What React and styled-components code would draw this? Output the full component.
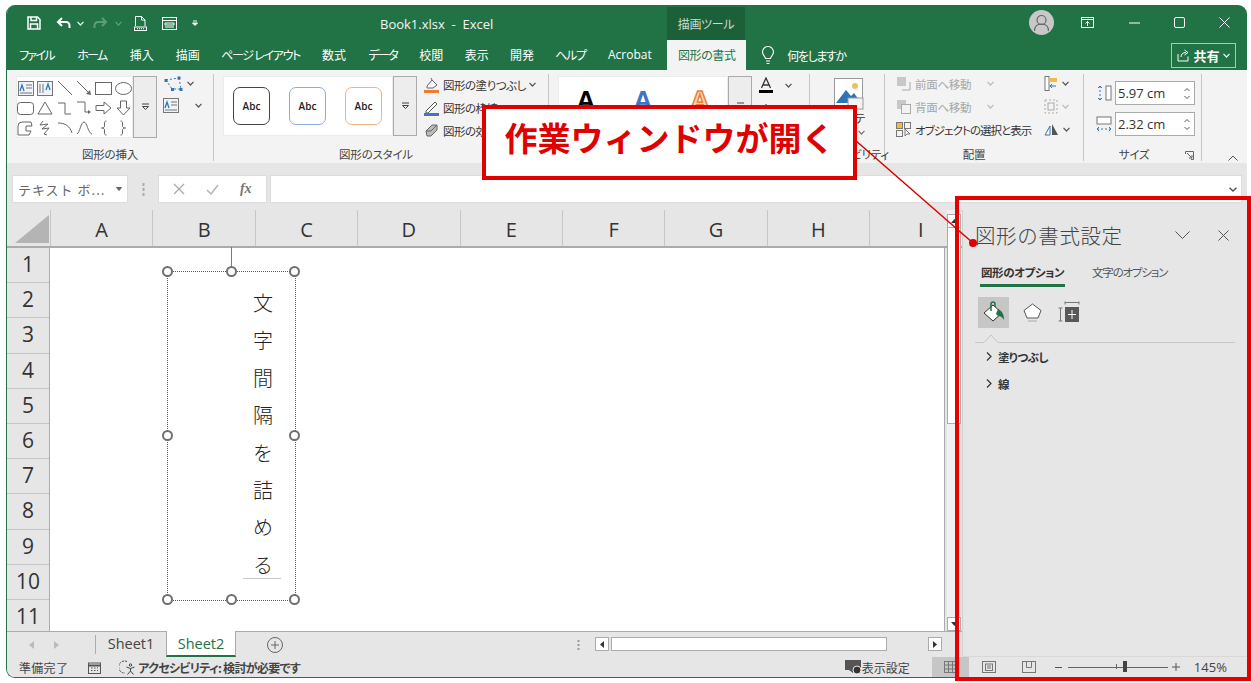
import React from "react";
import styled, { createGlobalStyle } from "styled-components";

const Global = createGlobalStyle`
  html, body { margin: 0; padding: 0; background: #fff; overflow: hidden; }
  * { box-sizing: border-box; }
`;
const UI = `"Noto Sans CJK JP", "Noto Sans", sans-serif`;
const LATIN = `"Open Sans", "Noto Sans CJK JP", sans-serif`;

const Page = styled.div`
  position: relative; width: 1251px; height: 683px; padding: 5px 4px 5px 6px; overflow: hidden;
  font-family: ${UI}; font-feature-settings: "palt"; color: #333;
`;
const Win = styled.div`
  width: 1241px; height: 673px; display: flex; flex-direction: column; overflow: hidden;
  border-radius: 9px 9px 0 9px; border-left: 1px solid #217346; border-bottom: 1px solid #217346; background: #e6e6e6;
`;
const TitleBar = styled.div`
  height: 35px; flex: none; display: flex; background: #217346; color: #fff;
`;
const Qat = styled.div`
  width: 373px; flex: none; display: flex; align-items: center; padding-left: 19px;
`;
const QatBtn = styled.div`
  width: ${p => p.$w}px; margin-left: ${p => p.$ml || 0}px; display: flex; justify-content: center; align-items: center; padding-top: 1px;
`;
const Title = styled.div`
  width: 287px; flex: none; font: 13px/35px ${LATIN}; color: #f2f7f4; padding-top: 2px;
`;
const ContextTab = styled.div`
  width: 78px; flex: none; margin-top: 2px; background: #1c6039; color: #c9dcd1; font-size: 12px; line-height: 33px; text-align: center; letter-spacing: -.3px;
`;
const TitleRight = styled.div`
  flex: 1; display: flex; align-items: center; padding-left: 284px;
`;
const Avatar = styled.div`
  width: 25px; height: 25px; flex: none; border-radius: 50%; background: #c8c8c8; display: flex; align-items: center; justify-content: center; margin-right: 27px;
`;
const WinBtn = styled.div`
  width: ${p => p.$w}px; flex: none; display: flex; justify-content: ${p => p.$start ? "flex-start" : "center"};
`;
const TabBar = styled.div`
  height: 30px; flex: none; display: flex; align-items: stretch; background: #217346; color: #fff; padding-left: 12px; font-size: 12px; position: relative;
`;
const Tab = styled.div`
  width: ${p => p.$w}px; flex: none; margin-right: ${p => p.$mr ?? 22.4}px; display: flex; justify-content: center; line-height: 30px; white-space: nowrap; letter-spacing: ${p => p.$ls ?? 0}px;
  ${p => p.$active && `background:#f3f3f3;color:#217346;`}
  ${p => p.$latin && `font-family:${LATIN};`}
`;
const Tell = styled.div`
  display: flex; align-items: center; gap: 12px; margin-left: 15px; font-size: 12px; letter-spacing: -1.4px;
`;
const Share = styled.div`
  margin-left: auto; margin-right: 11px; margin-top: 3px; height: 25px; width: 65px; border: 1px solid #a9c9b7;
  display: flex; align-items: center; justify-content: center; gap: 3px; font-size: 13px; font-weight: 700; align-self: flex-start;
`;
const Ribbon = styled.div`
  height: 93px; flex: none; display: flex; background: #f3f3f3; padding-top: 4px; padding-bottom: 2px;
`;
const Group = styled.div`
  width: ${p => p.$w}px; flex: none; display: flex; flex-direction: column; border-right: 1px solid #c6c6c6; position: relative;
`;
const GroupBody = styled.div`
  height: 71px; display: flex; padding: 2px 0 0 ${p => p.$pl || 0}px;
`;
const GroupLabel = styled.div`
  flex: 1; text-align: center; font-size: 11.5px; line-height: 14px; color: #444; position: relative; top: 2px; white-space: nowrap; letter-spacing: -.2px; padding-right: ${p => p.$pr || 0}px;
`;
const Launcher = styled.div`
  position: absolute; right: 7px; bottom: 1px; width: 9px; height: 9px;
`;
const Collapse = styled.div`
  flex: 1; display: flex; justify-content: flex-end; align-items: flex-end; padding: 0 9px 0 0;
`;
const Gallery = styled.div`
  width: ${p => p.$w}px; height: ${p => p.$h}px; background: #fff; flex: none; display: flex;
  ${p => p.$wrap ? "flex-wrap:wrap;align-content:flex-start;padding:2px 0 0 0;" : "align-items:center;"}
  box-shadow: inset 0 0 0 1px #ececec;
`;
const ShapeCell = styled.div`
  width: 19.5px; height: 20px; display: flex; align-items: center; justify-content: center;
`;
const More = styled.div`
  width: 24px; height: ${p => p.$h}px; flex: none; background: #ededed; border: 1px solid #ababab; display: flex; align-items: center; justify-content: center;
`;
const Abc = styled.div`
  width: 37px; height: 38px; margin-left: ${p => p.$ml}px; border: 1px solid ${p => p.$c}; border-radius: 7px; background: #fff;
  font: 600 10px/36px ${LATIN}; color: #222; text-align: center;
`;
const WordA = styled.div`
  width: 30px; margin-left: ${p => p.$ml}px; font: 700 26px/30px "Liberation Sans", sans-serif; color: ${p => p.$c}; text-align: center; align-self: flex-start; margin-top: 9px;
  ${p => p.$outline && `-webkit-text-stroke: 1.5px #ed7d31; color:#fbd9c2;`}
`;
const SmallCol = styled.div`
  display: flex; flex-direction: column; flex: none; width: ${p => p.$w ? p.$w + "px" : "auto"}; gap: ${p => p.$gap ?? 8}px; padding: ${p => p.$pt ?? 0}px 0 0 ${p => p.$pl ?? 0}px;
`;
const Cmd = styled.div`
  display: flex; align-items: center; gap: ${p => p.$gap ?? 3}px; height: ${p => p.$h ?? 15}px; font-size: 11.5px; letter-spacing: ${p => p.$ls ?? -.5}px; color: ${p => p.$dim ? "#a6a6a6" : "#333"}; white-space: nowrap;
`;
const AltText = styled.div`
  display: flex; flex-direction: column; align-items: center; width: 74px; padding-left: 3px; font-size: 11.5px; line-height: 14px; color: #333; padding-top: 2px;
`;
const AltLine = styled.div`
  margin-top: ${p => p.$mt || 0}px; padding-left: ${p => p.$pl || 0}px; height: 14px; display: flex; align-items: center;
`;
const SizeRow = styled.div`
  display: flex; align-items: center; gap: 3px;
`;
const SizeInput = styled.div`
  width: 80px; height: 24px; border: 1px solid #ababab; background: #fff; display: flex; align-items: center; justify-content: space-between; padding: 0 3px 0 2px; font: 13px/22px ${LATIN}; color: #333;
`;
const FormulaBar = styled.div`
  height: 47px; flex: none; display: flex; align-items: flex-start; padding: 12px 5px 0 5px; background: #e6e6e6;
`;
const NameBox = styled.div`
  width: 116px; height: 28px; background: #fff; border: 1px solid #dcdcdc; display: flex; align-items: center; justify-content: space-between; padding: 0 5px; font-size: 13px; letter-spacing: 1px; color: #666; font-feature-settings: normal;
`;
const Grip = styled.div`
  width: 30px; height: 28px; display: flex; align-items: center; justify-content: center;
`;
const FxBox = styled.div`
  width: 109px; height: 28px; background: #fff; border: 1px solid #dcdcdc; display: flex; align-items: center; justify-content: space-around; padding: 0 4px;
`;
const FxLabel = styled.span`
  font: italic 700 14px "Liberation Serif", serif; color: #777;
`;
const FormulaInput = styled.div`
  flex: 1; margin-left: 3px; height: 28px; background: #fff; border: 1px solid #dcdcdc; display: flex; align-items: center; justify-content: flex-end; padding-right: 4px;
`;
const Main = styled.div`
  flex: 1; min-height: 0; display: flex;
`;
const SheetArea = styled.div`
  width: 955px; flex: none; display: flex; flex-direction: column;
`;
const HeaderRow = styled.div`
  height: 38px; flex: none; display: flex; border-bottom: 2px solid #ababab; background: #e6e6e6; padding-right: 17px; overflow: hidden;
`;
const Corner = styled.div`
  width: 44px; flex: none; padding: 5px 0 0 8px; border-right: 1px solid #c6c6c6;
`;
const ColHead = styled.div`
  width: 102.4px; flex: none; text-align: center; font: 400 20px/40px ${LATIN}; color: #333; border-right: 1px solid #c6c6c6;
`;
const SheetBody = styled.div`
  height: 383px; flex: none; display: flex;
`;
const RowHeads = styled.div`
  width: 43px; flex: none; overflow: hidden; border-right: 1px solid #ababab; background: #e6e6e6;
`;
const RowHead = styled.div`
  height: 35.2px; text-align: center; font: 400 21px/33px ${LATIN}; color: #333; border-bottom: 1px solid #c6c6c6;
`;
const Canvas = styled.div`
  width: 895px; position: relative; background: #fff; flex: none; border-right: 1px solid #ababab;
`;
const VScroll = styled.div`
  width: 12px; flex: none; margin-left: 2px; display: flex; flex-direction: column; background: #f0f0f0; margin-top: -38px; height: 421px; position: relative;
`;
const ScrollBtn = styled.div`
  width: 14px; height: 14px; background: #fff; border: 1px solid #ababab; display: flex; align-items: center; justify-content: center; flex: none; margin-top: ${p => p.$mt || 0}px;
`;
const ScrollThumb = styled.div`
  width: 14px; flex: 0 0 196px; background: #fff; border: 1px solid #ababab; border-top: 0;
`;
const Fill = styled.span`
  flex: 1;
`;
const ShapeBox = styled.div`
  position: absolute; left: 117px; top: 23px; width: 129px; height: 330px; border: 1px dotted #555;
`;
const Stem = styled.div`
  position: absolute; left: 63px; top: -25px; width: 1px; height: 24px; background: #7a7a7a;
`;
const Handle = styled.div`
  position: absolute; left: calc(${p => p.$x}% - 6px); top: calc(${p => p.$y}% - 6px); width: 11px; height: 11px; border-radius: 50%; background: #fff; border: 2px solid #707070;
`;
const VText = styled.div`
  position: absolute; left: 75px; top: 12px; width: 40px; height: 300px; display: flex; flex-direction: column; align-items: center;
  font-size: 20px; line-height: 37.4px; color: #222; font-weight: 300; font-feature-settings: normal;
`;
const Caret = styled.div`
  position: absolute; left: 75px; top: 306px; width: 38px; height: 1px; background: #c8c8c8;
`;
const TabStrip = styled.div`
  height: 26px; flex: none; display: flex; align-items: stretch; background: #e6e6e6; border-top: 1px solid #ababab; position: relative;
`;
const NavArrows = styled.div`
  width: 89px; display: flex; align-items: center; padding-left: 22px; gap: 20px; flex: none; border-right: 1px solid #ababab; margin: 3px 0;
`;
const SheetTab = styled.div`
  width: ${p => p.$w}px; text-align: center; font: 14.5px/24px ${LATIN}; flex: none;
  ${p => p.$active ? `background:#fff;color:#217346;border-bottom:2px solid #217346;margin-top:-1px;line-height:25px;border-left:1px solid #ababab;border-right:1px solid #ababab;` : `color:#444;`}
`;
const AddSheet = styled.div`
  margin-left: 31px; display: flex; align-items: center;
`;
const TabDots = styled.div`
  margin-left: 294px; display: flex; align-items: center; width: 16px;
`;
const HScroll = styled.div`
  width: 347px; height: 14px; margin: 5px 0 0 2px; display: flex; gap: 2px; flex: none;
`;
const HThumb = styled.div`
  width: 276px; background: #fff; border: 1px solid #ababab;
`;
const HTrack = styled.div`
  flex: 1;
`;
const Pane = styled.div`
  flex: 1; background: #e6e6e6; padding-left: 12px; display: flex; flex-direction: column; border-left: 1px solid #d0d0d0;
`;
const PaneHead = styled.div`
  height: 50px; display: flex; align-items: center; padding-right: 18px; flex: none;
`;
const PaneTitle = styled.div`
  flex: 1; font-size: 20.5px; font-weight: 300; color: #444; letter-spacing: .6px; font-feature-settings: normal;
`;
const HeadGap = styled.span`
  width: ${p => p.$w || 28}px;
`;
const PaneTabs = styled.div`
  display: flex; gap: 26px; padding-left: 5px; height: 27px; margin-top: 2px; flex: none;
`;
const PaneTab = styled.div`
  font-size: 11.5px; line-height: 20px; height: 25px; white-space: nowrap; padding: 0 1px; width: ${p => p.$w}px;
  ${p => p.$active ? `font-weight:700;color:#333;border-bottom:3px solid #217346;letter-spacing:-.4px;` : `color:#555;letter-spacing:-1.2px;`}
`;
const PaneIcons = styled.div`
  display: flex; align-items: center; gap: 8px; height: 32px; margin-top: 7px; padding-left: 3px; flex: none;
`;
const PaneIcon = styled.div`
  width: ${p => p.$w || 31}px; height: 31px; display: flex; align-items: center; justify-content: center; ${p => p.$on && "background:#c6c6c6;"}
`;
const PaneRule = styled.div`
  height: 15px; margin-right: 12px; flex: none;
`;
const Section = styled.div`
  display: flex; align-items: center; gap: 6px; height: 27px; padding-left: 11px; font-size: 11.5px; font-weight: 700; color: #333; letter-spacing: -.6px; flex: none;
`;
const StatusBar = styled.div`
  height: 21px; flex: none; display: flex; align-items: center; background: #e6e6e6; font-size: 12px; color: #444; border-top: 1px solid #d8d8d8;
`;
const StatusText = styled.div`
  font-weight: ${p => p.$b ? 700 : 400}; font-size: ${p => p.$s || 12}px; margin-left: ${p => p.$ml || 0}px; white-space: nowrap; letter-spacing: ${p => p.$ls || 0}px; ${p => p.$latin && `font-family:${LATIN};`}
`;
const StatusIcon = styled.div`
  margin-left: ${p => p.$ml || 0}px; display: flex; align-items: center; flex: none;
`;
const ViewBtn = styled.div`
  width: ${p => p.$w}px; height: 20px; margin-left: ${p => p.$ml || 0}px; display: flex; align-items: center; justify-content: center; flex: none; ${p => p.$on && "background:#c6c6c6;"}
`;
const Zoom = styled.div`
  width: 100px; height: 1px; background: #666; position: relative; margin: 0 4px 0 6px; flex: none;
`;
const ZoomMark = styled.div`
  position: absolute; left: ${p => p.$x}px; top: ${p => -p.$h / 2}px; width: ${p => p.$w}px; height: ${p => p.$h}px; background: ${p => p.$c};
`;
const Callout = styled.div`
  position: absolute; left: 482px; top: 105px; width: 375px; height: 75px; background: #fff; border: 4px solid #e00000; display: flex; align-items: center; justify-content: center;
  font-size: 33px; font-weight: 700; color: #e00000; font-feature-settings: normal; white-space: nowrap; padding-bottom: 11px;
`;
const RedFrame = styled.div`
  position: absolute; left: 955px; top: 196px; width: 296px; height: 485px; border: 4.5px solid #e60000;
`;
const Connector = styled.svg`
  position: absolute; left: 0; top: 0; pointer-events: none;
`;
const Svg = styled.svg`
  display: block; flex: none;
`;

const I = ({ w = 16, h = 16, c = "#666", sw = 1, f = "none", children }) => (
  <Svg width={w} height={h} viewBox={`0 0 ${w} ${h}`} fill={f} stroke={c} strokeWidth={sw}>{children}</Svg>
);
const Chev = ({ c = "#555", w = 7, sw = 1.2 }) => (
  <I w={w} h={5} c={c} sw={sw}><path d={`M.5 .8 ${w / 2} 4 ${w - .5} .8`} /></I>
);
const MoreGlyph = () => (
  <I w={9} h={8} c="#444"><path d="M1 1h7" /><path d="M1.500 3.500h6L4.500 6.500z" /></I>
);
const TextBoxIcon = ({ vert }) => (
  <I w={16} h={15} c="#777">
    <rect x=".5" y=".5" width="15" height="14" fill="#eef3fa" />
    {vert
      ? <><path d="M3 3v9M6 3v9" /><path d="M9 9l2-6 2 6" stroke="#2e75b6" strokeWidth="1.3" /></>
      : <><path d="M2 10l2-6 2 6" stroke="#2e75b6" strokeWidth="1.3" /><path d="M8 4h6M8 7h6M2 12h12" /></>}
  </I>
);
const shapes = [
  <TextBoxIcon />, <TextBoxIcon vert />,
  <I w={16} h={16}><path d="M1 1 15 15" /></I>,
  <I w={16} h={16}><path d="M1 1 14 14" /><path d="M15 15l-1-5-4 4z" fill="#666" stroke="none" /></I>,
  <I w={17} h={13}><rect x=".5" y=".5" width="16" height="12" /></I>,
  <I w={17} h={13}><ellipse cx="8.5" cy="6.5" rx="8" ry="6" /></I>,
  <I w={17} h={13}><rect x=".5" y=".5" width="16" height="12" rx="3" /></I>,
  <I w={16} h={14}><path d="M8 1 15 13H1z" /></I>,
  <I w={15} h={13}><path d="M1 1h7v11h6" /></I>,
  <I w={16} h={14}><path d="M1 1h8v10h4" /><path d="M15 11l-3-2v4z" fill="#666" stroke="none" /></I>,
  <I w={17} h={14}><path d="M1 4.500h8V1l7 6-7 6V9.500H1z" /></I>,
  <I w={15} h={16}><path d="M4.500 1h6v7H14l-6.500 7L1 8h3.500z" /></I>,
  <I w={17} h={15}><path d="M1 14V5q0-4 4-4h9l1 4H9v5h5l-2 4z" /></I>,
  <I w={14} h={16}><path d="M5 1 2 5l8-1-6 5 7-1-5 6 3 1" /></I>,
  <I w={16} h={12}><path d="M1 1c7 0 12 3 14 10" /></I>,
  <I w={17} h={14}><path d="M1 13C4 11 5 1 8 1s4 11 8 12" /></I>,
  <I w={8} h={16}><path d="M6.500 1C4.500 1 4.500 2 4.500 4v2c0 1-1 2-3 2 2 0 3 1 3 2v2c0 2 0 3 2 3" /></I>,
  <I w={8} h={16}><path d="M1.500 1c2 0 2 1 2 3v2c0 1 1 2 3 2-2 0-3 1-3 2v2c0 2 0 3-2 3" /></I>,
];
const tabs = [
  ["ファイル", 35, -1.7], ["ホーム", 31, -1.6], ["挿入", 24, 0], ["描画", 23, 0], ["ページ レイアウト", 78, -1.3], ["数式", 24, 0], ["データ", 29, -1.6],
  ["校閲", 23, 0], ["表示", 23, 0], ["開発", 23, 0], ["ヘルプ", 29, -1.3],
];
const cols = ["A", "B", "C", "D", "E", "F", "G", "H", "I"];
const handles = [[0, 0], [50, 0], [100, 0], [0, 50], [100, 50], [0, 100], [50, 100], [100, 100]];
const Spin = () => <I w={8} h={13} c="#555"><path d="M1.500 4 4 1.500 6.500 4M1.500 9 4 11.500 6.500 9" /></I>;

export default function App() {
  return (
    <Page>
      <Global />
      <Win>
        <TitleBar>
          <Qat>
            <QatBtn $w={16}><I w={14} h={14} c="#fff" sw={1.5}><path d="M1 1h9.500L13 3.500V13H1z" /><path d="M3.500 13V8h7v5M4 1v3.500h5.500V1" /></I></QatBtn>
            <QatBtn $w={28} $ml={7}><I w={15} h={12} c="#fff" sw={2}><path d="M6 1 2 5l4 4" /><path d="M2.500 5H10a3.500 3.500 0 0 1 3.500 3.500V11" /></I></QatBtn>
            <QatBtn $w={7}><Chev c="#dfe" /></QatBtn>
            <QatBtn $w={32}><I w={15} h={12} c="#5f9c7b" sw={2}><path d="M9 1l4 4-4 4" /><path d="M12.500 5H5a3.500 3.500 0 0 0-3.500 3.500V11" /></I></QatBtn>
            <QatBtn $w={5}><Chev c="#5f9c7b" /></QatBtn>
            <QatBtn $w={38}><I w={13} h={15} c="#fff"><path d="M1.500 10V.5h6l3.500 3.500v6M7.500 .5V4H11" /><rect x=".5" y="11" width="12" height="3.500" /><path d="M3 12.700h7" strokeDasharray="1 1" /></I></QatBtn>
            <QatBtn $w={20}><I w={15} h={13} c="#fff"><rect x=".5" y=".5" width="14" height="12" /><path d="M.5 3.500h14M3 6h9v2H3zM3 10h9" /></I></QatBtn>
            <QatBtn $w={32}><I w={6} h={6} c="#fff"><path d="M1 1h4M.5 3 3 5.500 5.500 3z" fill="#fff" /></I></QatBtn>
          </Qat>
          <Title>Book1.xlsx&nbsp; -&nbsp; Excel</Title>
          <ContextTab>描画ツール</ContextTab>
          <TitleRight>
            <Avatar><I w={17} h={17} c="#666" sw={1.2}><circle cx="8.500" cy="6" r="4.500" /><path d="M1.500 17c0-5 3-7 7-7s7 2 7 7" /></I></Avatar>
            <WinBtn $w={31} $start><I w={13} h={11} c="#fff"><rect x=".5" y=".5" width="12" height="10" /><path d="M.5 2.500h12" /><path d="M6.500 9V4.500M4.500 6.500l2-2 2 2" /></I></WinBtn>
            <WinBtn $w={45}><I w={11} h={2} c="#fff"><path d="M0 1h11" /></I></WinBtn>
            <WinBtn $w={45}><I w={11} h={11} c="#fff"><rect x=".5" y=".5" width="10" height="10" rx="1.500" /></I></WinBtn>
            <WinBtn $w={45}><I w={11} h={11} c="#fff"><path d="M.5 .5l10 10M10.500 .5l-10 10" /></I></WinBtn>
          </TitleRight>
        </TitleBar>

        <TabBar>
          {tabs.map(([t, w, ls]) => <Tab key={t} $w={w} $ls={ls}>{t}</Tab>)}
          <Tab $w={45} $mr={15} $latin>Acrobat</Tab>
          <Tab $w={79} $mr={0} $ls={-.4} $active>図形の書式</Tab>
          <Tell>
            <I w={14} h={19} c="#fff" sw={1.1}><path d="M4.500 12.500C4 10 1.500 9 1.500 6a5.500 5.500 0 0 1 11 0c0 3-2.500 4-3 6.500zM5 15h4M5.500 17.500h3" /></I>
            <span>何をしますか</span>
          </Tell>
          <Share>
            <I w={13} h={13} c="#fff"><path d="M1 5v7h10V7.500" /><path d="M4 8c0-3 2-4.500 5-4.500M7.500 1 11 3.500 7.500 6" /></I>
            <span>共有</span>
            <Chev c="#dfe" />
          </Share>
        </TabBar>

        <Ribbon>
          <Group $w={207}>
            <GroupBody $pl={9}>
              <Gallery $w={117} $h={62} $wrap>
                {shapes.map((s, i) => <ShapeCell key={i}>{s}</ShapeCell>)}
              </Gallery>
              <More $h={62}><MoreGlyph /></More>
              <SmallCol $pl={6} $gap={7} $pt={0}>
                <Cmd $gap={4}>
                  <I w={20} h={16} c="#2e75b6"><path d="M3 4 16 2M3 4l6 9M16 2l2 11H9" strokeDasharray="2 2" /><path d="M1.500 3h3v3h-3zM14.500 .5h3v3h-3zM8 12h3v3H8zM16.500 12h3v3h-3z" fill="#2e75b6" stroke="none" /></I>
                  <Chev />
                </Cmd>
                <Cmd $gap={16}><TextBoxIcon /><Chev /></Cmd>
              </SmallCol>
            </GroupBody>
            <GroupLabel>図形の挿入</GroupLabel>
          </Group>

          <Group $w={335}>
            <GroupBody $pl={9}>
              <Gallery $w={170} $h={60}>
                <Abc $ml={10} $c="#444">Abc</Abc>
                <Abc $ml={19} $c="#8faadc">Abc</Abc>
                <Abc $ml={19} $c="#f4b183">Abc</Abc>
              </Gallery>
              <More $h={60}><MoreGlyph /></More>
              <SmallCol $pl={6} $gap={8} $pt={1}>
                <Cmd>
                  <I w={17} h={16} c="#666"><path d="M4 9 9 3l5 5-4 3H4z" fill="#f7f7f7" /><path d="M9 3 8 1" /><path d="M1 13h15v3H1z" fill="#ed7d31" stroke="none" /></I>
                  <span>図形の塗りつぶし</span><Chev />
                </Cmd>
                <Cmd>
                  <I w={17} h={16} c="#4472c4"><path d="M3 11 12 2l2 2-9 9H3z" fill="#fff" stroke="#555" /><path d="M1 13h15v3H1z" fill="#4472c4" stroke="none" /></I>
                  <span>図形の枠線</span>
                </Cmd>
                <Cmd>
                  <I w={17} h={15} c="#666"><path d="M3 8 9 2h5v5l-6 6H4z" fill="#bbb" /><path d="M3 8h5l6-6" /></I>
                  <span>図形の効果</span>
                </Cmd>
              </SmallCol>
            </GroupBody>
            <GroupLabel $pr={10}>図形のスタイル</GroupLabel>
          </Group>

          <Group $w={261}>
            <GroupBody $pl={9}>
              <Gallery $w={170} $h={60}>
                <WordA $ml={13} $c="#000">A</WordA>
                <WordA $ml={27} $c="#4472c4">A</WordA>
                <WordA $ml={27} $outline>A</WordA>
              </Gallery>
              <More $h={60}><MoreGlyph /></More>
              <SmallCol $pl={6} $gap={7} $pt={2}>
                <Cmd $gap={11}>
                  <I w={16} h={17} c="#333"><path d="M3.500 11 8 1l4.500 10M5 8h6" strokeWidth="1.300" /><path d="M1 13h14v3H1z" fill="#000" stroke="none" /></I>
                  <Chev />
                </Cmd>
                <Cmd><I w={16} h={10} c="#777"><path d="M8 1 5 9M8 1l3 8" /></I></Cmd>
              </SmallCol>
            </GroupBody>
          </Group>

          <Group $w={75}>
            <GroupBody>
              <AltText>
                <I w={30} h={32} c="#999">
                  <rect x=".5" y=".5" width="28" height="28" fill="#fff" />
                  <circle cx="21" cy="8" r="3" fill="#f0c060" stroke="none" />
                  <path d="M2 25 12 12l5 6 3-3 7 10z" fill="#2e75b6" stroke="none" />
                  <rect x="14" y="20" width="15" height="11" fill="#f3f3f3" />
                </I>
                <AltLine $mt={1}>代替テ</AltLine>
                <AltLine $pl={26}><Chev c="#777" /></AltLine>
              </AltText>
            </GroupBody>
            <GroupLabel>アクセシビリティ</GroupLabel>
          </Group>

          <Group $w={199}>
            <GroupBody $pl={11}>
              <SmallCol $gap={8} $pt={0} $w={136}>
                <Cmd $dim $gap={4} $ls={-.3}>
                  <I w={15} h={15} c="#aaa"><rect x="1" y="1" width="9" height="9" fill="#c8c8c8" stroke="none" /><path d="M14 6v8H6" /></I>
                  <span>前面へ移動</span><HeadGap $w={8} /><Chev c="#bbb" />
                </Cmd>
                <Cmd $dim $gap={4} $ls={-.3}>
                  <I w={15} h={15} c="#aaa"><rect x="1" y="1" width="9" height="9" fill="#c8c8c8" stroke="none" /><rect x="5.500" y="5.500" width="9" height="9" fill="#f3f3f3" /></I>
                  <span>背面へ移動</span><HeadGap $w={8} /><Chev c="#bbb" />
                </Cmd>
                <Cmd $gap={4} $ls={-.95}>
                  <I w={15} h={15} c="#777"><rect x=".5" y=".5" width="6" height="6" fill="#f4b942" /><rect x=".5" y="8.500" width="6" height="6" /><rect x="8.500" y=".5" width="6" height="6" /><path d="M9 7v7l2-2h3z" fill="#fff" /></I>
                  <span>オブジェクトの選択と表示</span>
                </Cmd>
              </SmallCol>
              <SmallCol $gap={8} $pt={0} $pl={12}>
                <Cmd $gap={4}><I w={14} h={15} c="#777"><rect x="1" y=".5" width="4" height="14" fill="#fff" /><path d="M5 2h8v4H5z" fill="#f4b942" stroke="none" /><path d="M12 10H6M8 8l-2 2 2 2" stroke="#2e75b6" /></I><Chev /></Cmd>
                <Cmd $gap={4}><I w={14} h={15} c="#aaa"><rect x="1" y="1" width="12" height="13" strokeDasharray="2 2" /><rect x="4" y="4" width="6" height="7" /></I><Chev c="#bbb" /></Cmd>
                <Cmd $gap={4}><I w={15} h={13} c="#666"><path d="M1 12 6 3v9z" fill="#fff" stroke="#2e75b6" /><path d="M8 1v11h6z" fill="#555" stroke="none" /></I><Chev /></Cmd>
              </SmallCol>
            </GroupBody>
            <GroupLabel $pr={20}>配置</GroupLabel>
          </Group>

          <Group $w={118}>
            <GroupBody $pl={12}>
              <SmallCol $gap={7} $pt={5}>
                <SizeRow>
                  <I w={16} h={16} c="#777"><rect x="10" y="1" width="5" height="14" fill="#fff" /><path d="M4 1v14" stroke="#2e75b6" strokeDasharray="2 2" /><path d="M2 3l2-2 2 2M2 13l2 2 2-2" stroke="#2e75b6" /></I>
                  <SizeInput>5.97 cm<Spin /></SizeInput>
                </SizeRow>
                <SizeRow>
                  <I w={16} h={16} c="#777"><rect x="1" y="1" width="14" height="7" fill="#fff" /><path d="M1 13h14" stroke="#2e75b6" strokeDasharray="2 2" /><path d="M3 11l-2 2 2 2M13 11l2 2-2 2" stroke="#2e75b6" /></I>
                  <SizeInput>2.32 cm<Spin /></SizeInput>
                </SizeRow>
              </SmallCol>
            </GroupBody>
            <GroupLabel $pr={17}>サイズ</GroupLabel>
            <Launcher><I w={9} h={9} c="#666"><path d="M.5 3V.5H8.500V8.500H6M2 2l5 5M7 4v3H4" /></I></Launcher>
          </Group>

          <Collapse><I w={10} h={6} c="#555"><path d="M.5 5.500 5 1l4.500 4.500" /></I></Collapse>
        </Ribbon>

        <FormulaBar>
          <NameBox>
            <span>テキスト ボ...</span>
            <I w={6} h={4} c="#666" f="#666"><path d="M.5 .5h5L3 3.500z" /></I>
          </NameBox>
          <Grip><I w={3} h={13} c="#aaa" sw={2}><path d="M1.500 0v3M1.500 5v3M1.500 10v3" /></I></Grip>
          <FxBox>
            <I w={12} h={12} c="#aaa" sw={1.300}><path d="M1 1l10 10M11 1 1 11" /></I>
            <I w={13} h={11} c="#b5b5b5" sw={1.500}><path d="M1 6l4 4 7-9" /></I>
            <FxLabel>fx</FxLabel>
          </FxBox>
          <FormulaInput><Chev c="#555" w={8} sw={1.500} /></FormulaInput>
        </FormulaBar>

        <Main>
          <SheetArea>
            <HeaderRow>
              <Corner><I w={34} h={28} c="none" f="#b4b4b4"><path d="M34 0v28H0z" /></I></Corner>
              {cols.map(c => <ColHead key={c}>{c}</ColHead>)}
            </HeaderRow>
            <SheetBody>
              <RowHeads>
                {Array.from({ length: 11 }, (_, i) => <RowHead key={i}>{i + 1}</RowHead>)}
              </RowHeads>
              <Canvas>
                <ShapeBox>
                  <Stem />
                  <VText>
                    {"文字間隔を詰める".split("").map((c, i) => <span key={i}>{c}</span>)}
                  </VText>
                  <Caret />
                  {handles.map(([x, y]) => <Handle key={`${x}-${y}`} $x={x} $y={y} />)}
                </ShapeBox>
              </Canvas>
              <VScroll>
                <ScrollBtn $mt={4}><I w={7} h={4} c="none" f="#333"><path d="M3.500 0 7 4H0z" /></I></ScrollBtn>
                <ScrollThumb />
                <Fill />
                <ScrollBtn><I w={7} h={4} c="none" f="#333"><path d="M3.500 4 7 0H0z" /></I></ScrollBtn>
              </VScroll>
            </SheetBody>
            <TabStrip>
              <NavArrows>
                <I w={5} h={8} c="none" f="#bbb"><path d="M5 0v8L0 4z" /></I>
                <I w={5} h={8} c="none" f="#bbb"><path d="M0 0v8l5-4z" /></I>
              </NavArrows>
              <SheetTab $w={70}>Sheet1</SheetTab>
              <SheetTab $w={70} $active>Sheet2</SheetTab>
              <AddSheet>
                <I w={16} h={16} c="#666"><circle cx="8" cy="8" r="7.500" /><path d="M8 4v8M4 8h8" /></I>
              </AddSheet>
              <TabDots><I w={3} h={10} c="#999" sw={2}><path d="M1.500 0v2M1.500 4v2M1.500 8v2" /></I></TabDots>
              <HScroll>
                <ScrollBtn><I w={4} h={7} c="none" f="#333"><path d="M4 0v7L0 3.500z" /></I></ScrollBtn>
                <HThumb />
                <HTrack />
                <ScrollBtn><I w={4} h={7} c="none" f="#333"><path d="M0 0v7l4-3.500z" /></I></ScrollBtn>
              </HScroll>
            </TabStrip>
          </SheetArea>

          <Pane>
            <PaneHead>
              <PaneTitle>図形の書式設定</PaneTitle>
              <I w={15} h={8} c="#555"><path d="M.5 .5 7.500 7.500 14.500 .5" /></I>
              <HeadGap />
              <I w={11} h={11} c="#555"><path d="M.5 .5l10 10M10.500 .5l-10 10" /></I>
            </PaneHead>
            <PaneTabs>
              <PaneTab $active $w={85}>図形のオプション</PaneTab>
              <PaneTab $w={80}>文字のオプション</PaneTab>
            </PaneTabs>
            <PaneIcons>
              <PaneIcon $on>
                <I w={24} h={22} c="#217346" sw={1.500}>
                  <path d="M2 12 11 4l9 8-9 8z" fill="#fff" stroke="#333" strokeWidth="1" />
                  <path d="M9 10V3a2 2 0 0 1 4 0v3" />
                  <path d="M16 8c4 2 6 5 6 11-2-3-3-4-6-4l-2-2z" fill="#217346" stroke="none" />
                </I>
              </PaneIcon>
              <PaneIcon>
                <I w={19} h={19} c="#555"><path d="M9.500 1 18 7.500 15 15H4L1 7.500z" fill="#fff" /><path d="M5 18h9" stroke="#aaa" /></I>
              </PaneIcon>
              <PaneIcon $w={26}>
                <I w={24} h={22} c="#777"><path d="M1.500 7h4M3.500 7v13M1.500 20h4M8 1.500h14M8 .5v3M22 .5v3" /><rect x="8" y="6" width="14" height="15" fill="#595959" stroke="none" /><path d="M15 9v9M11 13.500h8" stroke="#fff" /></I>
              </PaneIcon>
            </PaneIcons>
            <PaneRule>
              <I w={260} h={15} c="#c8c8c8"><path d="M0 14.500h9L16 7l7 7.500h237" /></I>
            </PaneRule>
            <Section><I w={6} h={9} c="#333" sw={1.200}><path d="M1 .5 5 4.500 1 8.500" /></I>塗りつぶし</Section>
            <Section><I w={6} h={9} c="#333" sw={1.200}><path d="M1 .5 5 4.500 1 8.500" /></I>線</Section>
          </Pane>
        </Main>

        <StatusBar>
          <StatusText $ml={12} $ls={.3}>準備完了</StatusText>
          <StatusIcon $ml={20}><I w={13} h={13} c="#555"><rect x=".5" y="2" width="12" height="10.500" /><path d="M.5 4.500h12" strokeWidth="2" /><path d="M3 7h7M3 9.500h7" strokeDasharray="1.500 1.500" /></I></StatusIcon>
          <StatusIcon $ml={18}><I w={17} h={15} c="#444"><path d="M8 1.500a6 6 0 1 0-2 11.500" strokeDasharray="2 1" /><circle cx="11.500" cy="5" r="1.200" /><path d="M7.500 7l4 1.500 4-1.500M11.500 8.500V11l-3 3.500M11.500 11l3 3.500" /></I></StatusIcon>
          <StatusText $ml={2} $b $ls={-.7}>アクセシビリティ: 検討が必要です</StatusText>
          <StatusIcon $ml={545}><I w={17} h={14} c="none" f="#555"><path d="M0 0h16v10H8v3l-4-3H0z" /><circle cx="12" cy="10" r="4" fill="#333" stroke="#e6e6e6" /></I></StatusIcon>
          <StatusText>表示設定</StatusText>
          <ViewBtn $on $ml={22} $w={37}><I w={13} h={12} c="#777"><rect x=".5" y=".5" width="12" height="11" /><path d="M4.500 .5v11M8.500 .5v11M.5 4h12M.5 8h12" /></I></ViewBtn>
          <ViewBtn $w={40}><I w={14} h={12} c="#777"><rect x=".5" y=".5" width="13" height="11" /><rect x="3.500" y="3" width="7" height="6.500" /><path d="M5 5h4M5 7h4" /></I></ViewBtn>
          <ViewBtn $w={40}><I w={14} h={12} c="#777"><rect x=".5" y=".5" width="13" height="11" /><path d="M4.500 .5v6h5v-6" /></I></ViewBtn>
          <StatusIcon $ml={6}><I w={7} h={3} c="#555"><path d="M0 1.500h7" /></I></StatusIcon>
          <Zoom>
            <ZoomMark $x={48} $w={1} $h={5} $c="#666" />
            <ZoomMark $x={55} $w={4} $h={11} $c="#444" />
          </Zoom>
          <StatusIcon><I w={8} h={8} c="#555"><path d="M0 4h8M4 0v8" /></I></StatusIcon>
          <StatusText $ml={14} $s={13} $latin>145%</StatusText>
        </StatusBar>
      </Win>

      <RedFrame />
      <Connector width="1251" height="683" viewBox="0 0 1251 683">
        <path d="M855 140 973 243" stroke="#e00000" strokeWidth="1.500" />
        <circle cx="973" cy="243" r="4" fill="#e00000" />
      </Connector>
      <Callout>作業ウィンドウが開く</Callout>
    </Page>
  );
}
